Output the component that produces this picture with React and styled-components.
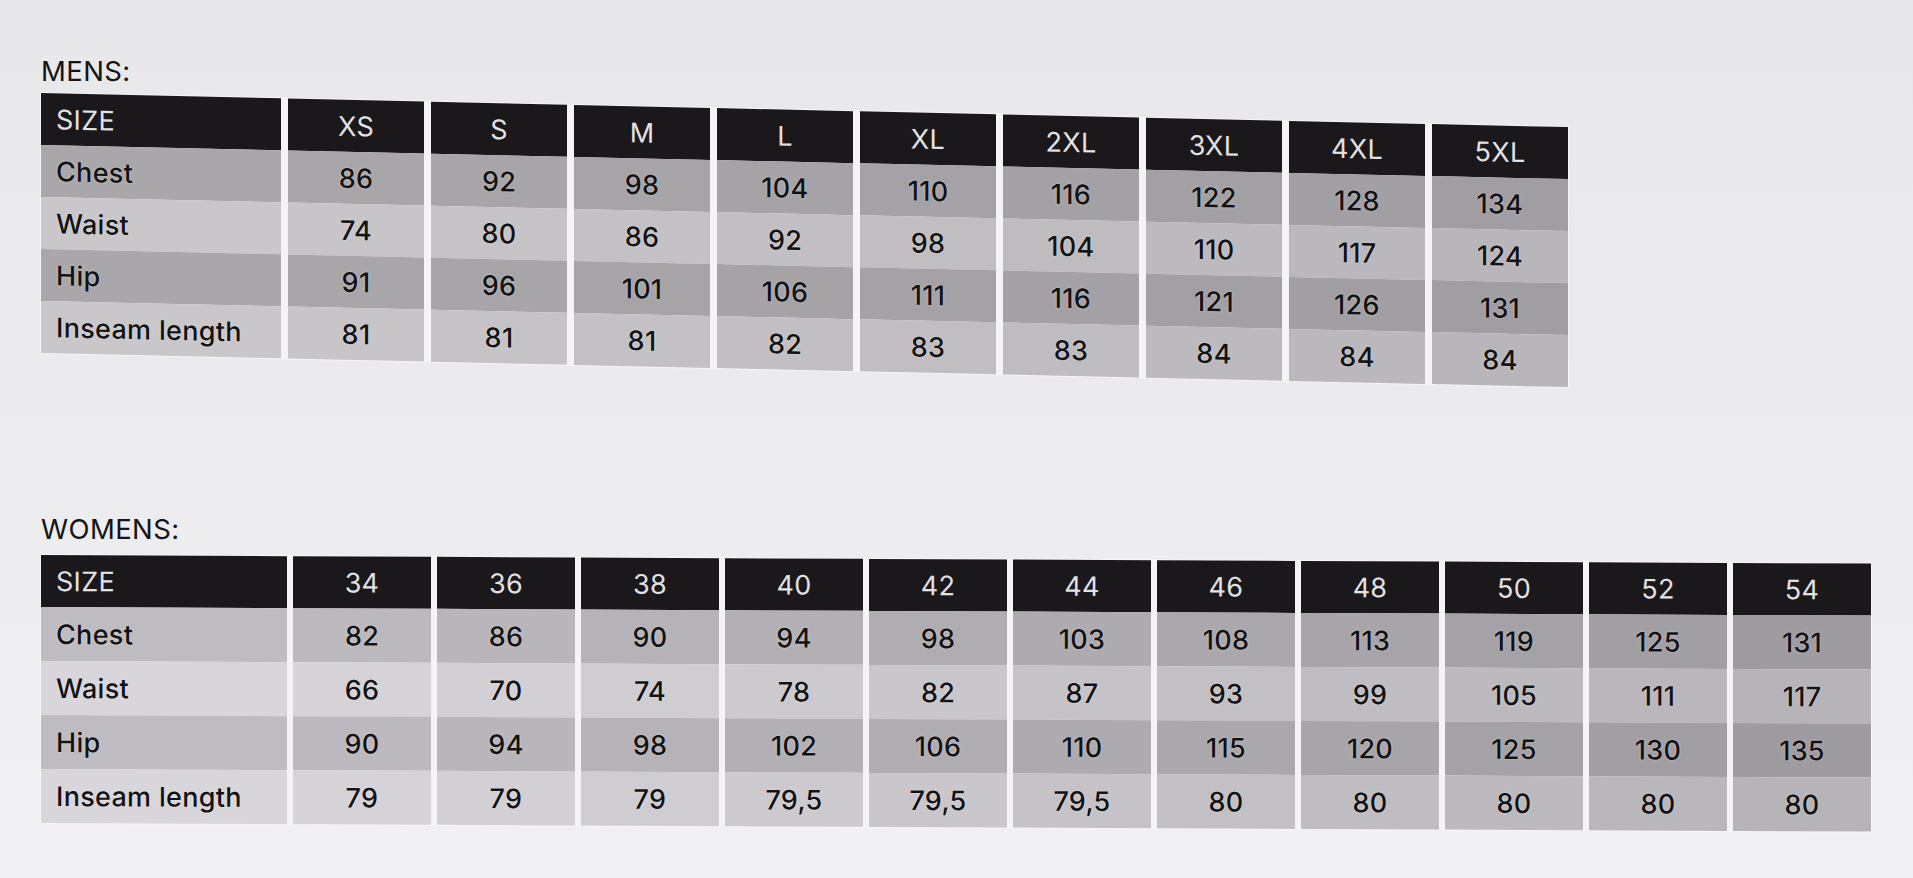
import React from 'react';
import styled, { createGlobalStyle } from 'styled-components';

const GlobalStyle = createGlobalStyle`
  html, body {
    margin: 0;
    padding: 0;
  }
  body {
    min-height: 878px;
    background: linear-gradient(180deg, #e8e7ea 0%, #ebeaed 45%, #f1f0f2 100%);
    font-family: Inter, "Noto Sans", sans-serif;
    color: #151416;
  }
`;

const mens = {
  title: 'MENS:',
  titleGap: 7.5,
  labelWidth: 240,
  colWidth: 136,
  gap: 7,
  headerHeight: 52,
  rowHeight: 52,
  skew: 1.28,
  palette: {
    dark: [[169, 167, 170], [160, 158, 162]],
    light: [[201, 199, 202], [184, 182, 186]],
  },
  sizes: ['XS', 'S', 'M', 'L', 'XL', '2XL', '3XL', '4XL', '5XL'],
  rows: [
    ['Chest', [86, 92, 98, 104, 110, 116, 122, 128, 134]],
    ['Waist', [74, 80, 86, 92, 98, 104, 110, 117, 124]],
    ['Hip', [91, 96, 101, 106, 111, 116, 121, 126, 131]],
    ['Inseam length', [81, 81, 81, 82, 83, 83, 84, 84, 84]],
  ],
};

const womens = {
  title: 'WOMENS:',
  titleGap: 11.5,
  labelWidth: 246,
  colWidth: 138,
  gap: 6,
  headerHeight: 52,
  rowHeight: 54,
  skew: 0.27,
  palette: {
    dark: [[190, 188, 192], [158, 156, 160]],
    light: [[216, 214, 218], [182, 180, 184]],
  },
  sizes: ['34', '36', '38', '40', '42', '44', '46', '48', '50', '52', '54'],
  rows: [
    ['Chest', [82, 86, 90, 94, 98, 103, 108, 113, 119, 125, 131]],
    ['Waist', [66, 70, 74, 78, 82, 87, 93, 99, 105, 111, 117]],
    ['Hip', [90, 94, 98, 102, 106, 110, 115, 120, 125, 130, 135]],
    ['Inseam length', [79, 79, 79, '79,5', '79,5', '79,5', 80, 80, 80, 80, 80]],
  ],
};

// shade drifts from left to right like the light on the printed page
const mix = (pair, t) => {
  const [a, b] = pair;
  const c = a.map((v, i) => Math.round(v + (b[i] - v) * t));
  return `rgb(${c.join(',')})`;
};

const Page = styled.main`
  padding: 58px 0 0 41px;
`;

const Section = styled.section`
  margin-top: ${({ $top }) => $top}px;
`;

const Title = styled.h2`
  margin: 0;
  font-size: 27.5px;
  line-height: 1;
  font-weight: 400;
  letter-spacing: 0.4px;
  color: #141315;
`;

const Table = styled.div`
  display: flex;
  width: max-content;
  gap: ${({ $gap }) => $gap}px;
  margin-top: ${({ $top }) => $top}px;
  background: #f4f3f5;
  box-shadow: 0 0 0 1px rgba(250, 249, 251, 0.7);
  transform: skewY(${({ $skew }) => $skew}deg);
  transform-origin: left center;
`;

const Column = styled.div`
  display: flex;
  flex-direction: column;
  width: ${({ $width }) => $width}px;
`;

const Cell = styled.div`
  display: flex;
  align-items: center;
  justify-content: ${({ $label }) => ($label ? 'flex-start' : 'center')};
  padding-left: ${({ $label }) => ($label ? '15px' : '0')};
  height: ${({ $height }) => $height}px;
  font-size: 27px;
  font-weight: ${({ $head }) => ($head ? 400 : 500)};
  letter-spacing: 0.3px;
  background: ${({ $bg }) => $bg};
  color: ${({ $head }) => ($head ? '#e2e1e3' : '#121113')};
  text-shadow: ${({ $head }) =>
    $head ? 'none' : '0 0 2px rgba(255, 255, 255, 0.55)'};
`;

const HEAD = '#1a181b';

const SizeTable = ({ data, top }) => {
  const n = data.sizes.length;
  const tone = (row, col) =>
    mix(row % 2 === 0 ? data.palette.dark : data.palette.light, col / n);

  return (
    <Section $top={top}>
      <Title>{data.title}</Title>
      <Table $gap={data.gap} $skew={data.skew} $top={data.titleGap}>
        <Column $width={data.labelWidth}>
          <Cell $label $head $bg={HEAD} $height={data.headerHeight}>
            SIZE
          </Cell>
          {data.rows.map(([name], r) => (
            <Cell key={name} $label $bg={tone(r, 0)} $height={data.rowHeight}>
              {name}
            </Cell>
          ))}
        </Column>
        {data.sizes.map((size, c) => (
          <Column key={size} $width={data.colWidth}>
            <Cell $head $bg={HEAD} $height={data.headerHeight}>
              {size}
            </Cell>
            {data.rows.map(([name, values], r) => (
              <Cell key={name} $bg={tone(r, c + 1)} $height={data.rowHeight}>
                {values[c]}
              </Cell>
            ))}
          </Column>
        ))}
      </Table>
    </Section>
  );
};

const App = () => (
  <>
    <GlobalStyle />
    <Page>
      <SizeTable data={mens} top={0} />
      <SizeTable data={womens} top={163} />
    </Page>
  </>
);

export default App;
